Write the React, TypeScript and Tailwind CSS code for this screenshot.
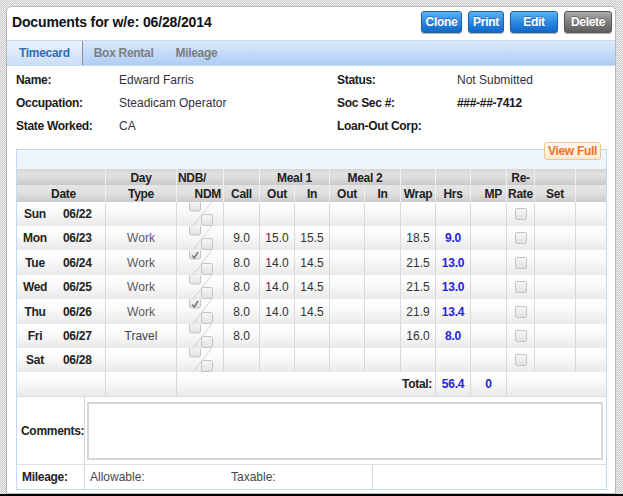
import React from "react";

const COLS =
  "grid grid-cols-[89px_71px_47px_36px_35px_35px_35px_36px_35px_35px_36px_28px_41px_30px]";

type Row = {
  day: string;
  date: string;
  type: string;
  checked: boolean;
  call: string;
  o1: string;
  i1: string;
  o2: string;
  i2: string;
  wrap: string;
  hrs: string;
  h: number;
};

const rows: Row[] = [
  { day: "Sun", date: "06/22", type: "", checked: false, call: "", o1: "", i1: "", o2: "", i2: "", wrap: "", hrs: "", h: 24 },
  { day: "Mon", date: "06/23", type: "Work", checked: false, call: "9.0", o1: "15.0", i1: "15.5", o2: "", i2: "", wrap: "18.5", hrs: "9.0", h: 24 },
  { day: "Tue", date: "06/24", type: "Work", checked: true, call: "8.0", o1: "14.0", i1: "14.5", o2: "", i2: "", wrap: "21.5", hrs: "13.0", h: 25 },
  { day: "Wed", date: "06/25", type: "Work", checked: false, call: "8.0", o1: "14.0", i1: "14.5", o2: "", i2: "", wrap: "21.5", hrs: "13.0", h: 24 },
  { day: "Thu", date: "06/26", type: "Work", checked: true, call: "8.0", o1: "14.0", i1: "14.5", o2: "", i2: "", wrap: "21.9", hrs: "13.4", h: 25 },
  { day: "Fri", date: "06/27", type: "Travel", checked: false, call: "8.0", o1: "", i1: "", o2: "", i2: "", wrap: "16.0", hrs: "8.0", h: 24 },
  { day: "Sat", date: "06/28", type: "", checked: false, call: "", o1: "", i1: "", o2: "", i2: "", wrap: "", hrs: "", h: 24 },
];

function NdbBoxes({ h, checked }: { h: number; checked: boolean }) {
  return (
    <svg width="47" height={h} className="block">
      <defs>
        <linearGradient id="cbg" x1="0" y1="0" x2="0" y2="1">
          <stop offset="0" stopColor="#f7f7f7" />
          <stop offset="1" stopColor="#e1e1e1" />
        </linearGradient>
      </defs>
      <line x1="16" y1={h} x2="37" y2="-3" stroke="#d8ccd0" strokeWidth="1" />
      <rect x="12.5" y="-1.5" width="11" height="10.5" rx="2" fill="url(#cbg)" stroke="#c4c4c4" />
      <rect x="24.5" y={h - 11.5} width="11" height="11" rx="2" fill="url(#cbg)" stroke="#c4c4c4" />
      {checked && (
        <path d="M15 5.5 L17.3 8 L21 2" stroke="#7a7a7a" strokeWidth="1.5" fill="none" />
      )}
    </svg>
  );
}

function CheckBox() {
  return (
    <div className="w-[12px] h-[12px] rounded-[2px] border border-[#c4c4c4] bg-[linear-gradient(to_bottom,#f8f8f8,#e0e0e0)]" />
  );
}

const cellB = "border-r border-[#d9d9d9] flex items-center justify-center";
const hCell = "border-r border-[#efefef] flex items-center justify-center";

export default function App() {
  return (
    <div className="w-[623px] h-[496px] flex flex-col bg-[image:repeating-conic-gradient(#c6c6c6_0%_25%,#f2f2f2_0%_50%)] bg-[length:2px_2px] font-['Liberation_Sans',Arial,sans-serif] text-[12px] text-[#333]">
      <div className="pt-[6px] pl-[6px] h-[494px]">
        <div className="w-[610px] h-[488px] bg-white border border-[#b8b8b8] rounded-t-[5px] flex flex-col overflow-hidden">
          {/* Title row */}
          <div className="h-[30px] flex items-center justify-between pl-[5px] pr-[3px]">
            <div className="text-[14px] font-bold text-[#111] tracking-[-0.15px]">
              Documents for w/e: 06/28/2014
            </div>
            <div className="flex gap-[6px]">
              {[
                ["Clone", "w-[41px]"],
                ["Print", "w-[36px]"],
                ["Edit", "w-[48px]"],
              ].map(([t, w]) => (
                <div
                  key={t}
                  className={`${w} h-[22px] flex items-center justify-center rounded-[3px] border border-[#1b5fa9] bg-[linear-gradient(to_bottom,#5fb1f5,#2b88e2_50%,#1168c8)] text-white font-bold tracking-[-0.3px] shadow-[0_1px_1px_rgba(0,0,0,0.3)] [text-shadow:0_-1px_0_rgba(0,0,0,0.3)]`}
                >
                  {t}
                </div>
              ))}
              <div className="w-[48px] h-[22px] flex items-center justify-center rounded-[3px] border border-[#555] bg-[linear-gradient(to_bottom,#ababab,#7e7e7e_50%,#5e5e5e)] text-white font-bold tracking-[-0.3px] shadow-[0_1px_1px_rgba(0,0,0,0.3)] [text-shadow:0_-1px_0_rgba(0,0,0,0.3)]">
                Delete
              </div>
            </div>
          </div>

          {/* Tab bar */}
          <div className="mt-[3px] h-[26px] flex border-t border-[#c4d9f3] border-b border-[#8fb6e8] bg-[linear-gradient(to_bottom,#dde9fb,#c4dbf8_50%,#adcdf4)] font-bold tracking-[-0.3px]">
            <div className="px-[12px] flex items-center border-r border-[#8a8f99] bg-[linear-gradient(to_bottom,#ecf3fd,#c9def8)] text-[#2f6db5]">
              Timecard
            </div>
            <div className="px-[11px] flex items-center text-[#7d7d7d]">Box Rental</div>
            <div className="px-[11px] flex items-center text-[#7d7d7d]">Mileage</div>
          </div>

          {/* Info */}
          <div className="pt-[2px] pl-[9px] grid grid-cols-[103px_218px_120px_1fr] auto-rows-[23px] items-center">
            <div className="font-bold text-[#1a1a1a] tracking-[-0.3px]">Name:</div>
            <div className="text-[#352f40]">Edward Farris</div>
            <div className="font-bold text-[#1a1a1a] tracking-[-0.3px]">Status:</div>
            <div className="text-[#352f40]">Not Submitted</div>
            <div className="font-bold text-[#1a1a1a] tracking-[-0.3px]">Occupation:</div>
            <div className="text-[#352f40]">Steadicam Operator</div>
            <div className="font-bold text-[#1a1a1a] tracking-[-0.3px]">Soc Sec #:</div>
            <div className="font-bold text-[#1a1a1a] tracking-[-0.3px]">###-##-7412</div>
            <div className="font-bold text-[#1a1a1a] tracking-[-0.3px]">State Worked:</div>
            <div className="text-[#352f40]">CA</div>
            <div className="font-bold text-[#1a1a1a] tracking-[-0.3px]">Loan-Out Corp:</div>
            <div></div>
          </div>

          {/* Timecard box */}
          <div className="relative mt-[12px] ml-[9px] w-[591px] border border-[#c3d9f2] flex flex-col">
            <div className="absolute right-[5px] top-[-8px] w-[57px] h-[18px] flex items-center justify-center rounded-[3px] border border-[#f0c58f] bg-[linear-gradient(to_bottom,#fffaf3,#fde9d0)] text-[#ea7424] font-bold tracking-[-0.3px]">
              View Full
            </div>
            <div className="h-[19px] bg-[#eef5fd]" />

            {/* Header row 1 */}
            <div className={`${COLS} h-[16px] bg-[linear-gradient(to_bottom,#d4d4d4,#e2e2e2_30%,#d9d9d9_65%,#c8c8c8)] font-bold text-[#222] tracking-[-0.3px]`}>
              <div className={hCell}></div>
              <div className={hCell}>Day</div>
              <div className="border-r border-[#efefef] flex items-center pl-[1px]">NDB/</div>
              <div className={hCell}></div>
              <div className={`${hCell} col-span-2`}>Meal 1</div>
              <div className={`${hCell} col-span-2`}>Meal 2</div>
              <div className={hCell}></div>
              <div className={hCell}></div>
              <div className={hCell}></div>
              <div className={hCell}>Re-</div>
              <div className={hCell}></div>
              <div></div>
            </div>
            {/* Header row 2 */}
            <div className={`${COLS} h-[17px] bg-[linear-gradient(to_bottom,#e6e6e6,#dedede_55%,#cbcbcb)] font-bold text-[#222] tracking-[-0.3px]`}>
              <div className={`${hCell} pl-[5px]`}>Date</div>
              <div className={hCell}>Type</div>
              <div className="border-r border-[#efefef] flex items-center justify-end pr-[2px]">NDM</div>
              <div className={hCell}>Call</div>
              <div className={hCell}>Out</div>
              <div className={hCell}>In</div>
              <div className={hCell}>Out</div>
              <div className={hCell}>In</div>
              <div className={hCell}>Wrap</div>
              <div className={hCell}>Hrs</div>
              <div className="border-r border-[#efefef] flex items-center justify-end pr-[4px]">MP</div>
              <div className={hCell}>Rate</div>
              <div className={hCell}>Set</div>
              <div></div>
            </div>

            {/* Body rows */}
            {rows.map((r) => (
              <div
                key={r.day}
                className={`${COLS} ${r.h === 25 ? "h-[25px]" : "h-[24px]"} bg-[linear-gradient(to_bottom,#ffffff,#fafafa_40%,#e9e9e9)]`}
              >
                <div className="border-r border-[#d9d9d9] flex items-center font-bold text-[#222] tracking-[-0.3px]">
                  <div className="w-[36px] text-center">{r.day}</div>
                  <div className="pl-[10px]">{r.date}</div>
                </div>
                <div className={`${cellB} ${r.type === "Travel" ? "text-[#444]" : "text-[#5a5a5a]"}`}>{r.type}</div>
                <div className="border-r border-[#d9d9d9] overflow-hidden">
                  <NdbBoxes h={r.h} checked={r.checked} />
                </div>
                <div className={cellB}>{r.call}</div>
                <div className={cellB}>{r.o1}</div>
                <div className={cellB}>{r.i1}</div>
                <div className={cellB}>{r.o2}</div>
                <div className={cellB}>{r.i2}</div>
                <div className={cellB}>{r.wrap}</div>
                <div className={`${cellB} font-bold text-[#2424dc] tracking-[-0.2px]`}>{r.hrs}</div>
                <div className={cellB}></div>
                <div className={cellB}>
                  <CheckBox />
                </div>
                <div className={cellB}></div>
                <div></div>
              </div>
            ))}

            {/* Total row */}
            <div className={`${COLS} h-[24px] bg-[linear-gradient(to_bottom,#ffffff,#fafafa_40%,#e9e9e9)]`}>
              <div className={cellB}></div>
              <div className={cellB}></div>
              <div className="col-span-7 border-r border-[#d9d9d9] flex items-center justify-end pr-[3px] font-bold text-[#222] tracking-[-0.3px]">
                Total:
              </div>
              <div className={`${cellB} font-bold text-[#2424dc] tracking-[-0.2px]`}>56.4</div>
              <div className={`${cellB} font-bold text-[#2424dc]`}>0</div>
              <div className="col-span-3"></div>
            </div>

            {/* Comments */}
            <div className="grid grid-cols-[68px_1fr] h-[69px] border-t border-[#dedede] border-b border-[#dadada]">
              <div className="border-r border-[#d9d9d9] flex items-center pl-[4px] font-bold text-[#222] tracking-[-0.3px]">
                Comments:
              </div>
              <div className="pl-[2px] pr-[3px] pt-[5px] pb-[4px]">
                <textarea
                  readOnly
                  className="block w-full h-full resize-none border-2 border-[#d6d6d6] bg-white outline-none"
                />
              </div>
            </div>

            {/* Mileage */}
            <div className="grid grid-cols-[68px_288px_1fr] h-[24px]">
              <div className="border-r border-[#d9d9d9] flex items-center pl-[5px] font-bold text-[#222] tracking-[-0.3px]">
                Mileage:
              </div>
              <div className="border-r border-[#d9d9d9] flex items-center pl-[5px] text-[#4a4550]">
                <div className="w-[141px]">Allowable:</div>
                <div>Taxable:</div>
              </div>
              <div></div>
            </div>
          </div>
        </div>
      </div>
      <div className="h-[2px] w-full bg-black" />
    </div>
  );
}
